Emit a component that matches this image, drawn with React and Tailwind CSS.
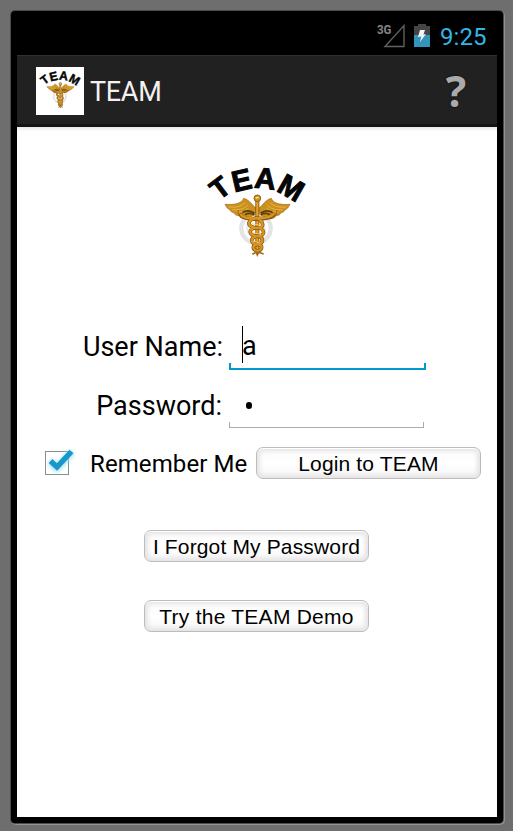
import React from "react";

function Wing() {
  return (
    <g>
      <path
        d="M184 160 C172 152 164 134 146 130 C140 144 124 150 90 148 C94 157 99 163 106 165 C105 169 112 173 118 174 C118 179 126 182 132 182 C138 190 148 192 158 188 C169 190 177 179 184 172 Z"
        fill="#cc901f"
        stroke="#a5711e"
        strokeWidth="2"
      />
      <path d="M101 156 Q134 160 150 143 M112 164 Q140 168 158 151 M127 172 Q146 172 160 160" fill="none" stroke="#e9b34a" strokeWidth="3" />
      <path d="M142 173 Q156 162 178 174 M150 179 Q164 171 178 180" fill="none" stroke="#5c4010" strokeWidth="5" />
      <path d="M130 165 Q126 187 148 191 Q168 192 182 185" fill="none" stroke="#9a6a1a" strokeWidth="3" />
    </g>
  );
}

function TeamLogo({ viewBox, className }) {
  return (
    <svg viewBox={viewBox} className={className} role="img" aria-label="TEAM">
      <circle cx="183" cy="220" r="44" fill="none" stroke="#e4e4e4" strokeWidth="13" />
      <circle cx="183" cy="220" r="26" fill="none" stroke="#e8e8e8" strokeWidth="7" />
      <g
        fontFamily="'Liberation Sans', Arial, sans-serif"
        fontWeight="700"
        fontSize="88"
        textAnchor="middle"
        fill="#050505"
        stroke="#050505"
        strokeWidth="3"
      >
        <text transform="translate(75 99) rotate(-37)" y="29" fontSize="84">T</text>
        <text transform="translate(139 75) rotate(-13)" y="31">E</text>
        <text transform="translate(211 70) rotate(6)" y="31">A</text>
        <text transform="translate(289 98) rotate(30)" y="31" fontSize="88">M</text>
      </g>
      <Wing />
      <g transform="matrix(-1 0 0 1 375 0)">
        <Wing />
      </g>
      <path d="M187 136 V294" stroke="#805313" strokeWidth="12" />
      <path d="M187 136 V292" stroke="#e2a22b" strokeWidth="7" />
      <g fill="none" strokeLinecap="round">
        <path d="M138 180 C147 198 224 195 236 178 M187 189 C156 194 154 212 179 218 C201 223 215 208 187 189 M180 218 C157 225 164 241 186 244 C210 243 213 226 190 217 M183 244 C165 249 167 265 185 268 C206 268 208 249 190 243 M185 269 C170 273 173 284 187 288 C204 284 203 271 190 268" stroke="#805313" strokeWidth="11" />
        <path d="M138 179 C147 196 224 193 236 177 M187 189 C156 194 154 212 179 218 C201 223 215 208 187 189 M180 218 C157 225 164 241 186 244 C210 243 213 226 190 217 M183 244 C165 249 167 265 185 268 C206 268 208 249 190 243 M185 269 C170 273 173 284 187 288 C204 284 203 271 190 268" stroke="#d9971f" strokeWidth="7" />
      </g>
      <path d="M172 206 L198 212 M171 233 L198 238 M174 259 L194 263" stroke="#f4cd70" strokeWidth="3" />
      <circle cx="187" cy="130" r="10" fill="#d1921e" stroke="#8f6116" strokeWidth="3" />
      <path d="M172 298 L184 292 L187 300 L191 292 L206 297" fill="none" stroke="#a56c18" strokeWidth="5" />
      <path d="M182 129 L191 127" stroke="#ffe493" strokeWidth="4" />
    </svg>
  );
}

function ImageButton({ children, className }) {
  return (
    <button
      className={`flex h-8 w-[225px] items-center justify-center whitespace-nowrap rounded-[7px] border border-[#bcbcbc] bg-linear-to-b from-[#fafafa] via-white to-[#f6f6f6] pt-[2px] font-['Liberation_Sans',Arial,sans-serif] text-black shadow-[inset_0_1px_0_#fff,inset_0_0_4px_3px_#e6e3e5] ${className}`}
    >
      {children}
    </button>
  );
}

function StatusBar() {
  return (
    <div className="flex h-[38px] items-start justify-end bg-black pr-[10px]">
      <svg className="mt-[5px] h-7 w-[29px]" viewBox="0 0 29 28">
        <text x="0" y="12" fontFamily="Roboto, sans-serif" fontSize="13" fontWeight="700" fill="#858585" textLength="14.5" lengthAdjust="spacingAndGlyphs">3G</text>
        <path d="M27 3.5 V24.5 H8 Z" fill="none" stroke="#606060" strokeWidth="1.4" />
      </svg>
      <svg className="ml-[8px] mt-[6px] h-6 w-4" viewBox="0 0 16 24">
        <path d="M4 1 H12 V3 H16 V24 H0 V3 H4 Z" fill="#454545" />
        <path d="M0 12 H16 V24 H0 Z" fill="#3395bb" />
        <path d="M6 7 H11 L9.5 11.5 L12 11 L6 19 L7.3 13.5 L4 14 Z" fill="#f4f4f4" />
      </svg>
      <span className="ml-[10px] mt-[5px] w-[47px] whitespace-nowrap text-[24px] leading-[30px] tracking-[0.1px] text-[#33b5e5]">9:25</span>
    </div>
  );
}

export default function App() {
  return (
    <div className="h-[831px] w-[513px] overflow-hidden bg-[#6e6e6e] pl-[11px] pt-[11px] font-['Roboto',sans-serif]">
      <div className="h-[812px] w-[492px] rounded-[4px] bg-black p-[6px] shadow-[0_0_0_1px_#4b4b4b,1px_1px_0_1px_#929292]">
        <StatusBar />
        <header className="flex h-[72px] items-center border-b-[3px] border-t border-b-[#151515] border-t-[#303030] bg-[#212121] pl-[19px] pt-px">
          <div className="h-12 w-12 bg-white">
            <TeamLogo viewBox="13 9 343 343" className="h-12 w-12" />
          </div>
          <h1 className="ml-[6px] pt-[2px] text-[27px] font-normal leading-8 tracking-[-0.3px] text-[#f5f1f3]">TEAM</h1>
          <button
            aria-label="Help"
            className="ml-auto mr-[29px] flex h-10 w-[24px] items-center justify-center font-['Open_Sans',sans-serif] text-[43px] font-bold leading-10 text-[#aaa] [text-shadow:0_0_2px_#000]"
          >
            ?
          </button>
        </header>
        <main className="h-[690px] bg-white bg-linear-to-b from-[#eee7eb] via-[#fffdfe] via-[4px] to-white to-[8px] pt-[28px]">
          <TeamLogo viewBox="0 0 375 330" className="ml-[178px] h-[110px] w-[125px]" />
          <div className="mt-[60px] flex h-[45px]">
            <label className="w-[206px] whitespace-nowrap pt-[6px] text-right text-[27px] leading-8">User Name:</label>
            <div className="ml-[6px] flex h-[45px] w-[197px] flex-col">
              <div className="flex h-[38px] items-start pl-[13px]">
                <i className="mt-px h-[37px] w-px bg-black" />
                <span className="-ml-px pt-[5px] text-[27px] leading-8">a</span>
              </div>
              <div className="h-[7px] border-2 border-t-0 border-[#0099cc]" />
            </div>
          </div>
          <div className="flex h-[58px]">
            <label className="w-[205px] whitespace-nowrap pt-[20px] text-right text-[27px] leading-8">Password:</label>
            <div className="ml-[7px] flex w-[195px] flex-col">
              <div className="flex h-[52px] items-center pl-[17px] pt-[18px]">
                <i className="h-[7px] w-[6px] rounded-full bg-black" />
              </div>
              <div className="h-[6px] border border-t-0 border-[#ababab]" />
            </div>
          </div>
          <div className="mt-[19px] flex h-8">
            <svg className="ml-[26px] h-8 w-[34px]" viewBox="0 0 34 32">
              <defs>
                <filter id="checkGlow" x="-40%" y="-40%" width="180%" height="180%">
                  <feGaussianBlur stdDeviation="2" />
                </filter>
              </defs>
              <rect x="2.5" y="4.5" width="23" height="23" fill="#fff" stroke="#8c8c8c" />
              <path d="M7 15 L14 21 L29 5" fill="none" stroke="#8ed9f5" strokeWidth="6" filter="url(#checkGlow)" />
              <path d="M7.5 14 L14 20 L28.5 4.5" fill="none" stroke="#1699c8" strokeWidth="5.4" />
            </svg>
            <label className="ml-[13px] w-[158px] whitespace-nowrap pt-px text-[24px] leading-[33px] tracking-[0.1px]">Remember Me</label>
            <ImageButton className="ml-[8px] text-[21px] tracking-[0.15px]">Login to TEAM</ImageButton>
          </div>
          <ImageButton className="ml-[127px] mt-[51px] text-[21px] tracking-[0.15px]">I Forgot My Password</ImageButton>
          <ImageButton className="ml-[127px] mt-[38px] text-[21px] tracking-[0.25px]">Try the TEAM Demo</ImageButton>
        </main>
      </div>
    </div>
  );
}
